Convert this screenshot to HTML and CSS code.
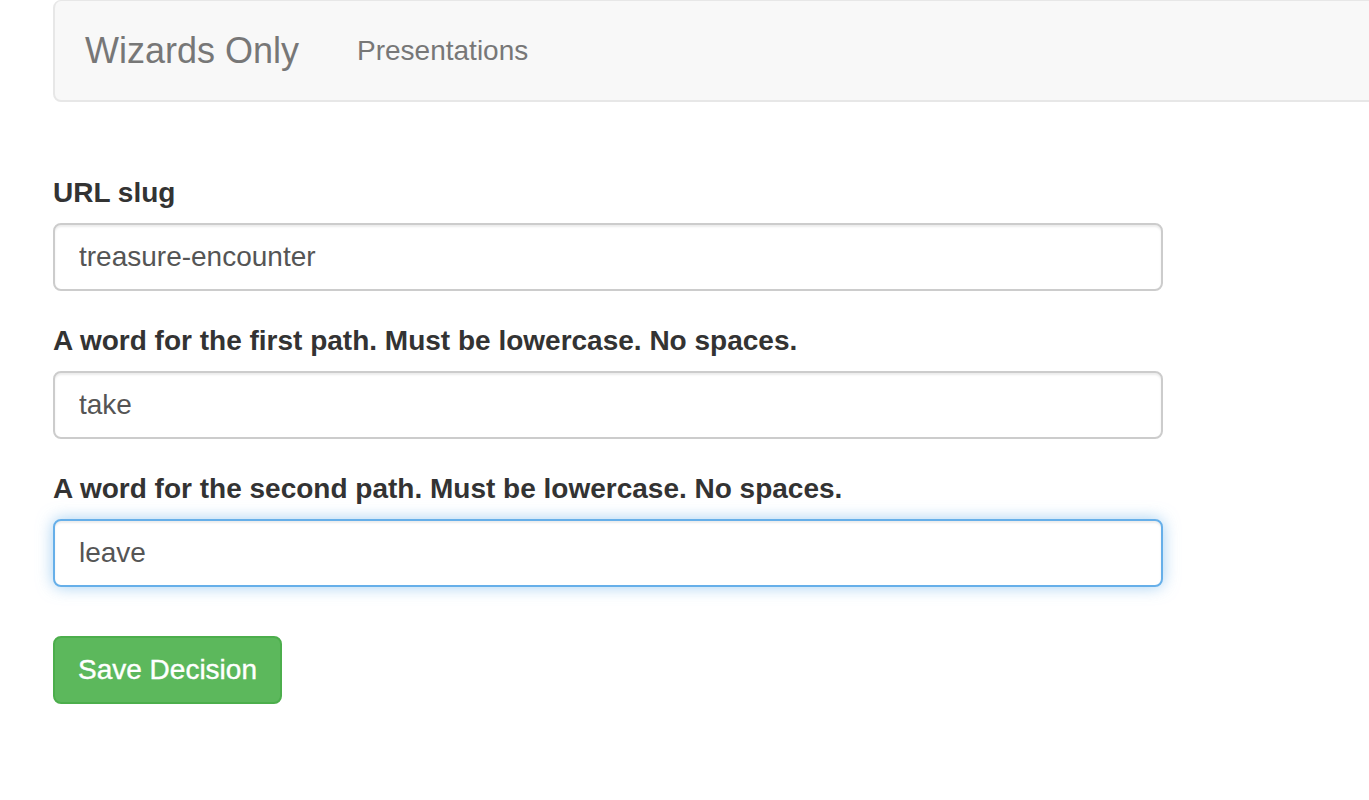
FILE: index.html
```html
<!DOCTYPE html>
<html>
<head>
<meta charset="utf-8">
<link rel="stylesheet" href="styles.css">
</head>
<body>
<div class="container">
  <nav class="navbar">
    <a class="brand">Wizards Only</a>
    <ul class="nav">
      <li><a>Presentations</a></li>
    </ul>
  </nav>
  <form class="form">
    <div class="form-group">
      <label>URL slug</label>
      <input class="form-control" type="text" value="treasure-encounter">
    </div>
    <div class="form-group">
      <label>A word for the first path. Must be lowercase. No spaces.</label>
      <input class="form-control" type="text" value="take">
    </div>
    <div class="form-group">
      <label>A word for the second path. Must be lowercase. No spaces.</label>
      <input class="form-control focus" type="text" value="leave">
    </div>
    <div class="actions">
      <button type="button" class="btn">Save Decision</button>
    </div>
  </form>
</div>
</body>
</html>
```
FILE: styles.css
```css
* { box-sizing: border-box; }
html, body { margin: 0; padding: 0; background: #fff; }
body {
  font-family: "Liberation Sans", Arial, Helvetica, sans-serif;
  font-size: 28px;
  line-height: 40px;
  color: #333;
  overflow: hidden;
}
.container {
  padding-left: 53px;
}
.navbar {
  display: flex;
  align-items: center;
  height: 102px;
  margin-right: -20px;
  background: #f8f8f8;
  border: 2px solid #e7e7e7;
  border-top-width: 1px;
  border-radius: 8px;
  margin-bottom: 71px;
}
.brand {
  padding: 0 28px 0 30px;
  font-size: 36px;
  line-height: 40px;
  color: #777;
}
.nav {
  list-style: none;
  margin: 0;
  padding: 0;
  display: flex;
}
.nav a {
  display: block;
  padding: 0 30px;
  font-size: 28px;
  line-height: 40px;
  color: #777;
}
.form { width: 1110px; }
.form-group { margin-bottom: 30px; }
label {
  display: block;
  font-weight: bold;
  margin-bottom: 10px;
  line-height: 40px;
}
.form-control {
  display: block;
  width: 100%;
  height: 68px;
  padding: 12px 24px;
  font-family: inherit;
  font-size: 28px;
  line-height: 40px;
  color: #555;
  background: #fff;
  border: 2px solid #ccc;
  border-radius: 8px;
  box-shadow: inset 0 2px 2px rgba(0,0,0,.075);
  outline: none;
}
.form-control.focus {
  border-color: #66afe9;
  box-shadow: inset 0 2px 2px rgba(0,0,0,.075), 0 0 16px rgba(102,175,233,.6);
}
.actions { padding-top: 19px; }
.btn {
  display: inline-block;
  height: 68px;
  padding: 12px 23px;
  font-family: inherit;
  font-size: 28px;
  line-height: 40px;
  color: #fff;
  background: #5cb85c;
  border: 2px solid #4cae4c;
  border-radius: 8px;
  cursor: pointer;
  -webkit-text-stroke: 0.4px #fff;
}
```
